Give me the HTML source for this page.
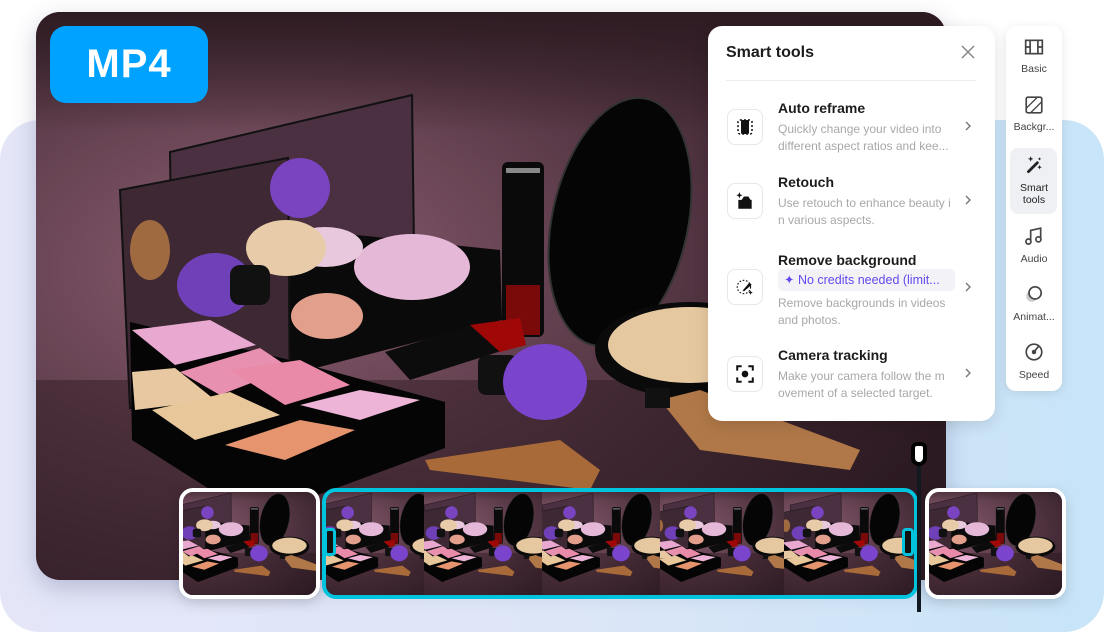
<!DOCTYPE html>
<html><head><meta charset="utf-8">
<style>
*{margin:0;padding:0;box-sizing:border-box}
body{width:1104px;height:640px;overflow:hidden;background:#fff;position:relative;font-family:"Liberation Sans",sans-serif}
.bg{position:absolute;left:0;top:120px;width:1104px;height:512px;border-radius:40px;background:linear-gradient(90deg,#e4e6f8 0%,#dde6f7 50%,#c7e4f8 100%)}
.main{position:absolute;left:36px;top:12px;width:910px;height:568px;border-radius:24px;overflow:hidden;box-shadow:0 8px 24px rgba(60,60,110,.25)}
.main svg{display:block}
.badge{position:absolute;left:50px;top:26px;width:158px;height:77px;background:#00a2ff;border-radius:16px;color:#fff;font-weight:bold;font-size:40px;display:flex;align-items:center;justify-content:center;letter-spacing:1px}
.panel{position:absolute;left:708px;top:26px;width:287px;height:395px;background:#fff;border-radius:14px;box-shadow:0 4px 16px rgba(0,0,0,.12)}
.panel h3{position:absolute;left:18px;top:18px;font-size:16px;font-weight:bold;color:#1c1c1c}
.close{position:absolute;left:252px;top:18px}
.div{position:absolute;left:18px;top:54px;width:250px;height:1px;background:#ececec}
.item{position:absolute;left:18px;width:260px}
.ic{position:absolute;left:1px;width:36px;height:36px;border:1px solid #e8e8e8;border-radius:8px;display:flex;align-items:center;justify-content:center}
.t{position:absolute;left:52px;font-size:14px;font-weight:bold;color:#1c1c1c;white-space:nowrap}
.d{position:absolute;left:52px;font-size:12px;line-height:17px;color:#a8a8a8;width:178px;white-space:nowrap}
.chev{position:absolute;left:238px}
.pill{position:absolute;left:52px;width:177px;height:22px;background:#f3f3f7;border-radius:5px;color:#6548ee;font-size:12.5px;line-height:22px;padding-left:6px;white-space:nowrap;overflow:hidden}
.side{position:absolute;left:1006px;top:26px;width:56px;height:365px;background:#fff;border-radius:10px;box-shadow:0 2px 10px rgba(0,0,0,.1)}
.si{position:absolute;left:0;width:56px;text-align:center;font-size:10.5px;line-height:12px;color:#444}
.si svg{display:block;margin:0 auto 7px}
.hl{position:absolute;left:4px;top:122px;width:47px;height:66px;background:#eef0f3;border-radius:8px}
.th{position:absolute;top:488px;height:111px;border-radius:14px;overflow:hidden;background:#3a2530}
.th svg{display:block;flex:none}
</style></head><body>
<div class="bg"></div>

<svg width="0" height="0" style="position:absolute">
<defs>
<radialGradient id="bgG" cx="0.25" cy="0.45" r="0.8">
<stop offset="0" stop-color="#8a5d70"/><stop offset="0.5" stop-color="#5a3a48"/><stop offset="1" stop-color="#2e1c25"/></radialGradient>
<linearGradient id="topG" x1="0" y1="0" x2="0" y2="1"><stop offset="0" stop-color="#2e1b22"/><stop offset="1" stop-color="#2e1b22" stop-opacity="0"/></linearGradient>
<g id="scene">
<rect x="36" y="12" width="910" height="568" fill="url(#bgG)"/>
<rect x="36" y="12" width="910" height="120" fill="url(#topG)"/>
<rect x="36" y="380" width="910" height="200" fill="#2a1820" opacity=".45"/>
<polygon points="170,152 412,95 414,248 172,300" fill="#4a3040" stroke="#111" stroke-width="2"/>
<polygon points="290,228 500,250 502,320 300,372 290,360" fill="#0a0a0a"/>
<ellipse cx="412" cy="267" rx="58" ry="33" fill="#e6b8d8"/>
<ellipse cx="327" cy="316" rx="36" ry="23" fill="#e2a08c"/>
<ellipse cx="325" cy="247" rx="38" ry="20" fill="#e8c8dc"/>
<polygon points="120,190 288,158 290,420 130,408" fill="#3e2834" stroke="#111" stroke-width="2"/>
<ellipse cx="286" cy="248" rx="40" ry="28" fill="#e8cba8"/>
<ellipse cx="215" cy="285" rx="38" ry="32" fill="#7040b8"/>
<rect x="230" y="265" width="40" height="40" rx="10" fill="#111"/>
<ellipse cx="300" cy="188" rx="30" ry="30" fill="#7a44c0"/>
<ellipse cx="150" cy="250" rx="20" ry="30" fill="#a06a40"/>
<polygon points="130,322 290,360 445,402 445,448 255,518 132,440" fill="#050505"/>
<polygon points="132,330 210,320 256,345 175,365" fill="#e8a8d0"/>
<polygon points="180,372 260,348 290,368 220,395" fill="#e890b0"/>
<polygon points="132,372 175,368 215,400 135,410" fill="#e8c8a0"/>
<polygon points="230,370 300,360 350,385 285,405" fill="#e88aa8"/>
<polygon points="152,410 230,392 280,415 195,440" fill="#e8c89a"/>
<polygon points="300,405 360,390 420,400 360,420" fill="#eeb4d8"/>
<polygon points="225,445 300,420 355,430 285,460" fill="#e6946e"/>
<rect x="502" y="162" width="42" height="175" rx="6" fill="#0a0a0a"/>
<rect x="506" y="285" width="34" height="50" fill="#7a0a0a"/>
<rect x="506" y="168" width="34" height="5" fill="#888"/>
<ellipse cx="620" cy="222" rx="68" ry="126" transform="rotate(12 620 222)" fill="#050505" stroke="#333" stroke-width="2"/>
<ellipse cx="690" cy="350" rx="95" ry="48" fill="#0a0a0a"/>
<ellipse cx="690" cy="345" rx="82" ry="38" fill="#e6c8a0"/>
<polygon points="385,352 490,320 520,345 410,380" fill="#0c0c0c"/>
<polygon points="470,325 520,318 526,345 500,352" fill="#a00808"/>
<rect x="478" y="355" width="40" height="40" rx="8" fill="#111"/>
<ellipse cx="545" cy="382" rx="42" ry="38" fill="#7a44cc"/>
<polygon points="425,460 560,440 600,470 590,490 430,470" fill="#a86a38"/>
<polygon points="660,400 700,390 860,450 850,470 700,450" fill="#b07848"/>
<rect x="645" y="388" width="25" height="20" fill="#111"/>
</g>
</defs></svg>

<div class="main"><svg width="910" height="568" viewBox="36 12 910 568"><use href="#scene"/></svg></div>
<div class="badge">MP4</div>

<div class="panel">
<h3>Smart tools</h3>
<svg class="close" width="16" height="16" viewBox="0 0 16 16"><path d="M2 2L14 14M14 2L2 14" stroke="#888" stroke-width="1.5"/></svg>
<div class="div"></div>

<div class="item" style="top:83px">
<div class="ic" style="top:0"><svg width="18" height="18" viewBox="0 0 18 18"><rect x="2" y="2" width="14" height="14" rx="2" fill="none" stroke="#111" stroke-dasharray="2 2" stroke-width="1.5"/><rect x="5" y="2" width="8" height="14" rx="1.5" fill="#111"/></svg></div>
<div class="t" style="top:-9px">Auto reframe</div>
<div class="d" style="top:12px">Quickly change your video into<br>different aspect ratios and kee...</div>
<svg class="chev" style="top:11px" width="8" height="12" viewBox="0 0 8 12"><path d="M2 2L6 6L2 10" fill="none" stroke="#777" stroke-width="1.4"/></svg>
</div>

<div class="item" style="top:157px">
<div class="ic" style="top:0"><svg width="20" height="20" viewBox="0 0 18 18"><path d="M3 8h3l2-3h4l2 3h1v8H3z" fill="#111"/><path d="M4 1l.8 2 2 .8-2 .8L4 6.6l-.8-2-2-.8 2-.8z" fill="#111"/></svg></div>
<div class="t" style="top:-9px">Retouch</div>
<div class="d" style="top:12px">Use retouch to enhance beauty i<br>n various aspects.</div>
<svg class="chev" style="top:11px" width="8" height="12" viewBox="0 0 8 12"><path d="M2 2L6 6L2 10" fill="none" stroke="#777" stroke-width="1.4"/></svg>
</div>

<div class="item" style="top:243px">
<div class="ic" style="top:0"><svg width="20" height="20" viewBox="0 0 18 18"><circle cx="8" cy="9" r="6" fill="none" stroke="#111" stroke-dasharray="1.5 1.5"/><path d="M7 12l6-7 2 2-7 6z" fill="#111"/><path d="M14 12l.6 1.4 1.4.6-1.4.6L14 16l-.6-1.4L12 14l1.4-.6z" fill="#111"/></svg></div>
<div class="t" style="top:-17px">Remove background</div>
<div class="pill" style="top:0">✦ No credits needed (limit...</div>
<div class="d" style="top:26px">Remove backgrounds in videos<br>and photos.</div>
<svg class="chev" style="top:12px" width="8" height="12" viewBox="0 0 8 12"><path d="M2 2L6 6L2 10" fill="none" stroke="#777" stroke-width="1.4"/></svg>
</div>

<div class="item" style="top:330px">
<div class="ic" style="top:0"><svg width="20" height="20" viewBox="0 0 18 18"><path d="M2 6V2h4M12 2h4v4M16 12v4h-4M6 16H2v-4" fill="none" stroke="#111" stroke-width="1.8"/><circle cx="9" cy="9" r="3" fill="#111"/></svg></div>
<div class="t" style="top:-9px">Camera tracking</div>
<div class="d" style="top:12px">Make your camera follow the m<br>ovement of a selected target.</div>
<svg class="chev" style="top:11px" width="8" height="12" viewBox="0 0 8 12"><path d="M2 2L6 6L2 10" fill="none" stroke="#777" stroke-width="1.4"/></svg>
</div>
</div>

<div class="side">
<div class="hl"></div>
<div class="si" style="top:12px"><svg width="20" height="18" viewBox="0 0 18 16"><rect x="1.5" y="2" width="15" height="12" fill="none" stroke="#444" stroke-width="1.5"/><path d="M5.5 2v12M12.5 2v12M1.5 8h4M12.5 8h4" stroke="#444" stroke-width="1.5"/></svg>Basic</div>
<div class="si" style="top:70px"><svg width="20" height="18" viewBox="0 0 18 16"><rect x="2" y="1" width="14" height="14" rx="1.5" fill="none" stroke="#444" stroke-width="1.5"/><path d="M2 11L12 1M6 15L16 5" stroke="#444" stroke-width="1.2"/></svg>Backgr...</div>
<div class="si" style="top:129px;color:#222"><svg width="20" height="20" viewBox="0 0 18 18"><path d="M4 15L12 7" stroke="#222" stroke-width="2.5" stroke-linecap="round"/><path d="M6 1l.7 1.8 1.8.7-1.8.7L6 6l-.7-1.8-1.8-.7 1.8-.7zM14 9l.6 1.4 1.4.6-1.4.6L14 13l-.6-1.4-1.4-.6 1.4-.6zM14 2l.5 1 1 .5-1 .5-.5 1-.5-1-1-.5 1-.5z" fill="#222"/></svg>Smart<br>tools</div>
<div class="si" style="top:200px"><svg width="20" height="20" viewBox="0 0 18 18"><path d="M6 14V4l9-2v10" fill="none" stroke="#444" stroke-width="1.5"/><circle cx="4" cy="14" r="2.3" fill="none" stroke="#444" stroke-width="1.5"/><circle cx="13" cy="12" r="2.3" fill="none" stroke="#444" stroke-width="1.5"/></svg>Audio</div>
<div class="si" style="top:258px"><svg width="20" height="20" viewBox="0 0 18 18"><circle cx="7" cy="11" r="5" fill="#ccc"/><circle cx="10" cy="8" r="5.5" fill="#fff" stroke="#444" stroke-width="1.5"/></svg>Animat...</div>
<div class="si" style="top:316px"><svg width="20" height="20" viewBox="0 0 18 18"><circle cx="9" cy="9" r="7" fill="none" stroke="#444" stroke-width="1.5"/><circle cx="9" cy="9" r="2" fill="#444"/><path d="M9 9l4-5" stroke="#444" stroke-width="1.5"/></svg>Speed</div>
</div>

<div class="th" style="left:179px;width:141px;border:4px solid #fff;box-shadow:0 4px 12px rgba(0,0,0,.15)"><svg width="133" height="103" viewBox="100 90 800 490" preserveAspectRatio="xMidYMid slice"><use href="#scene"/></svg></div>
<div class="th" style="left:322px;width:596px;border:4px solid #00c3dd;display:flex">
<svg width="98" height="103" viewBox="150 90 560 490" preserveAspectRatio="xMidYMid slice"><use href="#scene"/></svg>
<svg width="118" height="103" viewBox="100 90 700 490" preserveAspectRatio="xMidYMid slice"><use href="#scene"/></svg>
<svg width="118" height="103" viewBox="100 90 700 490" preserveAspectRatio="xMidYMid slice"><use href="#scene"/></svg>
<svg width="124" height="103" viewBox="100 90 700 490" preserveAspectRatio="xMidYMid slice"><use href="#scene"/></svg>
<svg width="130" height="103" viewBox="100 90 700 490" preserveAspectRatio="xMidYMid slice"><use href="#scene"/></svg>
</div>
<div style="position:absolute;left:324px;top:528px;width:12px;height:28px;border:3px solid #00c3dd;background:#111;border-radius:4px"></div>
<div style="position:absolute;left:902px;top:528px;width:12px;height:28px;border:3px solid #00c3dd;background:#111;border-radius:4px"></div>
<div class="th" style="left:925px;width:141px;border:4px solid #fff;box-shadow:0 4px 12px rgba(0,0,0,.15)"><svg width="133" height="103" viewBox="100 90 800 490" preserveAspectRatio="xMidYMid slice"><use href="#scene"/></svg></div>

<div style="position:absolute;left:917px;top:460px;width:4px;height:152px;background:#111820"></div>
<div style="position:absolute;left:911px;top:442px;width:16px;height:24px;background:#fff;border:4px solid #000;border-radius:6px 6px 8px 8px"></div>
</body></html>
